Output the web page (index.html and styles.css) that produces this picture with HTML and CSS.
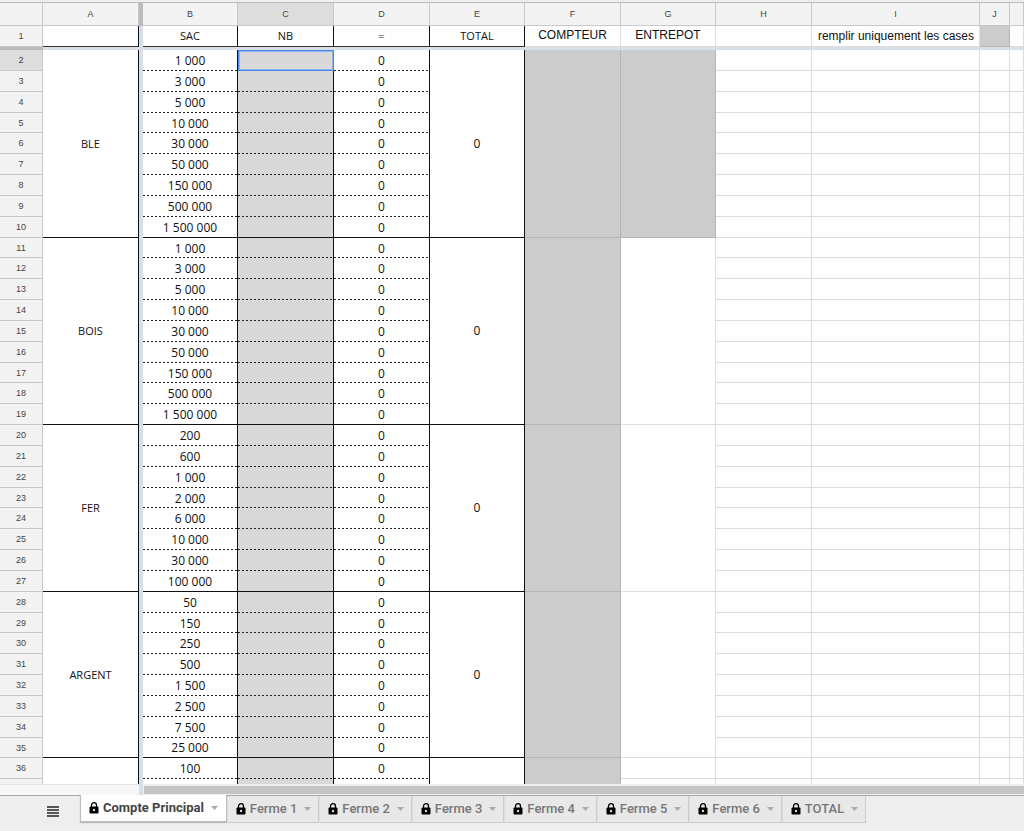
FILE: index.html
```html
<!DOCTYPE html>
<html lang="fr">
<head>
<meta charset="utf-8">
<title>Compte Principal</title>
<link rel="stylesheet" href="styles.css">
</head>
<body>
<main class="sheet">
  <table class="grid">
    <colgroup>
      <col class="w-head"><col class="w-data"><col class="w-freeze"><col class="w-b"><col class="w-data"><col class="w-data"><col class="w-b"><col class="w-data"><col class="w-b"><col class="w-data"><col class="w-i"><col class="w-j"><col>
    </colgroup>
    <thead>
      <tr class="letters">
        <th></th><th>A</th><th class="freeze"></th><th>B</th><th class="current">C</th><th>D</th><th>E</th><th>F</th><th>G</th><th>H</th><th>I</th><th>J</th><th></th>
      </tr>
      <tr class="titles">
        <th class="num">1</th><td class="strong"></td><td class="freeze"></td><td class="strong">SAC</td><td class="strong">NB</td><td class="strong">=</td><td class="strong">TOTAL</td><td class="arial raised">COMPTEUR</td><td class="arial raised">ENTREPOT</td><td></td><td class="arial note">remplir uniquement les cases</td><td class="fill"></td><td></td>
      </tr>
      <tr class="freeze-row"><th></th><td colspan="12"></td></tr>
    </thead>
    <tbody id="rows"></tbody>
  </table>
</main>
<div class="scroll"><div class="corner"></div><div class="split"></div><div class="track"><div class="thumb"></div></div></div>
<nav class="tabs" id="tabs" aria-label="Feuilles">
  <button class="all" aria-label="Toutes les feuilles"><svg width="12" height="12" viewBox="0 0 12 12"><path d="M0 1h12M0 4h12M0 7h12M0 10h12" stroke="#555" stroke-width="2"/></svg></button>
</nav>
<script src="script.js"></script>
</body>
</html>
```
FILE: styles.css
```css
* { box-sizing: border-box; }
body {
  margin: 0;
  height: 100vh;
  display: flex;
  flex-direction: column;
  overflow: hidden;
  background: #eee;
  font-family: "Open Sans", "Noto Sans", sans-serif;
  color: #111;
}
.sheet {
  flex: 1;
  min-height: 0;
  overflow: hidden;
  background: #fff;
  border-top: 2px solid #eee;
}
.grid {
  width: 100%;
  table-layout: fixed;
  border-collapse: separate;
  border-spacing: 0;
  border-top: 1px solid #bbb;
  font-size: 12px;
  line-height: 16px;
}
.w-head { width: 43px; }
.w-data { width: 96px; }
.w-b { width: 95px; }
.w-freeze { width: 4px; }
.w-i { width: 168px; }
.w-j { width: 30px; }

th, td {
  padding: 0;
  text-align: center;
  vertical-align: middle;
  white-space: nowrap;
  overflow: hidden;
  border-right: 1px solid #ddd;
  border-bottom: 1px solid #ddd;
}
th {
  font: 9px/12px "Liberation Sans", Arial, sans-serif;
  color: #444;
  background: #f3f3f3;
  border-color: #c8c8c8;
}
.current { background: #ddd; }
.letters th { height: 23px; }
.letters .freeze { background: #bbb; border-color: #bbb; }
.titles td { height: 21px; }
td.strong { border-right-color: #111; border-bottom-color: #333; }
.titles td.strong { font-size: 11px; }
td.freeze { background: #d9dfe9; border: 0; }
.freeze-row td { height: 3px; background: #d9dfe9; border: 0; }
.freeze-row th { background: #bbb; border: 0; }
.arial { font-family: "Liberation Sans", Arial, sans-serif; }
td.raised { padding-bottom: 2px; }
td.note { text-align: right; padding-right: 5px; }
td.fill { background: #ccc; border-color: #b5b5b5; }

tbody tr { height: 21px; }
tbody tr:nth-child(6n+4) { height: 20px; }
td.dash {
  border-bottom: 0;
  background-image: repeating-linear-gradient(90deg, #222 0 2px, transparent 2px 4px);
  background-size: 100% 1px;
  background-position: left bottom;
  background-repeat: no-repeat;
}
td.dark-right { border-right-color: #111; }
td.value { border-right-color: #111; padding-top: 1px; }
td.entry { background-color: #d9d9d9; border-right-color: #111; }
td.last { border-bottom-color: #111; }
td.name { font-size: 11px; }
td.selected {
  background-image: none;
  border: 1px solid #4a86e8;
  box-shadow: inset 0 0 0 1px #8fb3ee;
}

.scroll { display: flex; height: 11px; background: #e6e6e6; }
.corner { width: 139px; background: #f7f7f7; border-top: 1px solid #e6e6e6; }
.split { width: 4px; background: #d9dfe9; }
.track { flex: 1; padding: 2px 0 1px 1px; background: #eee; }
.thumb { height: 8px; background: #c4c4c4; }

.tabs {
  display: flex;
  align-items: flex-start;
  height: 36px;
  border-top: 1px solid #aaa;
  background: #eee;
}
button { margin: 0; font: 500 13px/16px Roboto, sans-serif; cursor: pointer; }
.all {
  display: flex;
  align-items: center;
  height: 32px;
  padding: 0 21px 0 47px;
  border: 0;
  background: none;
}
.tab {
  display: flex;
  align-items: center;
  height: 27px;
  padding: 0 7px 0 8px;
  border: 1px solid #ccc;
  border-top: 0;
  border-left-color: #ddd;
  background: #e8e8e8;
  color: #777;
}
.tab .lock { margin-right: 4px; }
.tab .arrow { margin-left: 7px; }
.tab.active {
  margin-top: -1px;
  padding: 0 8px;
  font-weight: 700;
  background: #fff;
  color: #444;
  border-color: #bbb;
  box-shadow: 0 1px 1px #bbb;
}
```
FILE: script.js
```js
const groups = [
  { name: "BLE", sacks: ["1 000", "3 000", "5 000", "10 000", "30 000", "50 000", "150 000", "500 000", "1 500 000"] },
  { name: "BOIS", sacks: ["1 000", "3 000", "5 000", "10 000", "30 000", "50 000", "150 000", "500 000", "1 500 000"] },
  { name: "FER", sacks: ["200", "600", "1 000", "2 000", "6 000", "10 000", "30 000", "100 000"] },
  { name: "ARGENT", sacks: ["50", "150", "250", "500", "1 500", "2 500", "7 500", "25 000"] },
  { name: "", sacks: ["100", ""] }
];

let number = 2;
let html = "";
groups.forEach((group, g) => {
  const span = group.sacks.length;
  group.sacks.forEach((sack, i) => {
    const line = i === span - 1 ? "last" : "dash";
    const total = group.name ? "0" : "";
    html += `<tr><th class="num${number === 2 ? " current" : ""}">${sack ? number : ""}</th>`;
    if (i === 0) html += `<td class="name dark-right last" rowspan="${span}">${group.name}</td>`;
    html += `<td class="freeze"></td>`;
    html += `<td class="value ${line}">${sack}</td>`;
    html += `<td class="entry ${line}${number === 2 ? " selected" : ""}"></td>`;
    html += `<td class="value ${line}">${sack ? "0" : ""}</td>`;
    if (i === 0) {
      html += `<td class="dark-right last" rowspan="${span}">${total}</td>`;
      html += `<td class="fill" rowspan="${span}"></td>`;
      if (group.name) html += `<td class="${g === 0 ? "fill" : ""}" rowspan="${span}"></td>`;
    }
    if (!group.name) html += `<td></td>`;
    html += `<td></td><td></td><td></td><td></td></tr>`;
    number++;
  });
});
document.getElementById("rows").innerHTML = html;

const lock = `<svg class="lock" width="10" height="12" viewBox="0 0 10 12"><path d="M2.500 5V3.200a2.500 2.500 0 0 1 5 0V5" fill="none" stroke="#000" stroke-width="1.300"/><rect x="0.500" y="4.500" width="9" height="7" rx="1" fill="#000"/><circle cx="5" cy="8" r="1.200" fill="#ddd"/></svg>`;
const arrow = `<svg class="arrow" width="7" height="4" viewBox="0 0 7 4"><path d="M0 0h7L3.500 4z" fill="#aaa"/></svg>`;
const sheets = ["Compte Principal", "Ferme 1", "Ferme 2", "Ferme 3", "Ferme 4", "Ferme 5", "Ferme 6", "TOTAL"];
document.getElementById("tabs").insertAdjacentHTML("beforeend", sheets.map((name, i) =>
  `<button class="tab${i === 0 ? " active" : ""}">${lock}<span>${name}</span>${arrow}</button>`).join(""));
```
